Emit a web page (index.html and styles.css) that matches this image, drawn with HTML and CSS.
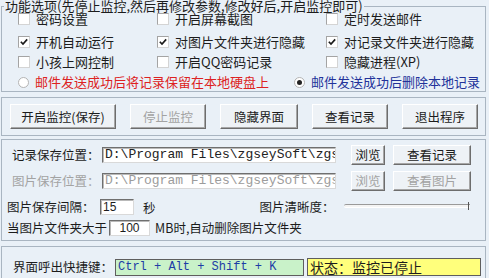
FILE: index.html
```html
<!DOCTYPE html>
<html lang="zh-CN">
<head>
<meta charset="UTF-8">
<meta name="viewport" content="width=device-width, initial-scale=1.0">
<title>监控设置</title>
<link rel="stylesheet" href="styles.css">
</head>
<body>

<div id="app">
  <fieldset class="options">
    <legend>功能选项(先停止监控,然后再修改参数,修改好后,开启监控即可)</legend>
    <div class="check-row first">
      <label class="opt"><span class="box"></span>密码设置</label>
      <label class="opt"><span class="box"></span>开启屏幕截图</label>
      <label class="opt"><span class="box"></span>定时发送邮件</label>
    </div>
    <div class="check-row second">
      <label class="opt"><span class="box"><svg viewBox="0 0 11 11"><path d="M2 5.2 L4.4 7.8 L9 2.6"/></svg></span>开机自动运行</label>
      <label class="opt"><span class="box"><svg viewBox="0 0 11 11"><path d="M2 5.2 L4.4 7.8 L9 2.6"/></svg></span>对图片文件夹进行隐藏</label>
      <label class="opt"><span class="box"><svg viewBox="0 0 11 11"><path d="M2 5.2 L4.4 7.8 L9 2.6"/></svg></span>对记录文件夹进行隐藏</label>
    </div>
    <div class="check-row">
      <label class="opt"><span class="box"></span>小孩上网控制</label>
      <label class="opt"><span class="box"></span>开启QQ密码记录</label>
      <label class="opt"><span class="box"></span>隐藏进程(XP)</label>
    </div>
    <div class="check-row radios">
      <label class="opt keep"><span class="radio"></span>邮件发送成功后将记录保留在本地硬盘上</label>
      <label class="opt del"><span class="radio on"></span>邮件发送成功后删除本地记录</label>
    </div>
  </fieldset>

  <div class="panel actions">
    <button class="btn w-start">开启监控(保存)</button>
    <button class="btn w-std off">停止监控</button>
    <button class="btn w-hide">隐藏界面</button>
    <button class="btn w-std">查看记录</button>
    <button class="btn w-std">退出程序</button>
  </div>

  <div class="panel settings">
    <div class="set-row">
      <span class="lbl path-lbl">记录保存位置：</span>
      <span class="field path">D:\Program Files\zgseySoft\zgse</span>
      <button class="btn small browse">浏览</button>
      <button class="btn small view">查看记录</button>
    </div>
    <div class="set-row r2">
      <span class="lbl path-lbl off">图片保存位置：</span>
      <span class="field path off">D:\Program Files\zgseySoft\zgse</span>
      <button class="btn small browse off">浏览</button>
      <button class="btn small view off">查看图片</button>
    </div>
    <div class="set-row r3">
      <span class="lbl gap-lbl">图片保存间隔：</span>
      <span class="field num">15</span>
      <span class="unit">秒</span>
      <span class="lbl clarity">图片清晰度：</span>
      <span class="slider"></span>
    </div>
    <div class="set-row r4">
      <span class="lbl">当图片文件夹大于</span>
      <span class="field num size">100</span>
      <span class="lbl after">MB时,自动删除图片文件夹</span>
    </div>
  </div>

  <div class="panel hotkey">
    <span class="lbl">界面呼出快捷键：</span>
    <span class="keys">Ctrl + Alt + Shift + K</span>
    <span class="status">状态：监控已停止</span>
  </div>
</div>

</body>
</html>
```

FILE: styles.css
```css
body {
  margin: 0;
  width: 489px;
  height: 278px;
  overflow: hidden;
  background-color: #e9f0f7;
  font-family: "Noto Sans CJK SC", "Liberation Sans", sans-serif;
  font-size: 12.5px;
  color: #1c1c1c;
}

#app {
  padding: 0 3px 0 1px;
}

/* groupbox du haut */
.options {
  margin: 0;
  padding: 0 0 1px 0;
  border: 1px solid #a9b5c1;
  min-width: 0;
}

.options legend {
  margin-left: 2px;
  padding: 0 1px;
  font-size: 13px;
  line-height: 12px;
}

.check-row {
  display: grid;
  grid-template-columns: 139px 169px 1fr;
  align-items: center;
  height: 16px;
  padding-left: 16px;
  margin-top: 4px;
  font-size: 13px;
  line-height: 16px;
}

.check-row.first {
  margin-top: 0;
  height: 13px;
  line-height: 13px;
}

.check-row.second {
  margin-top: 9px;
}

.check-row.radios {
  grid-template-columns: 276px 1fr;
}

.opt {
  display: flex;
  align-items: center;
  white-space: nowrap;
}

.box {
  width: 10px;
  height: 10px;
  margin-right: 6px;
  background-color: #fff;
  border: 1px solid #a4a4a4;
  border-right-color: #d4d4d4;
  border-bottom-color: #d4d4d4;
  flex: none;
}

.box svg {
  display: block;
  width: 10px;
  height: 10px;
}

.box path {
  fill: none;
  stroke: #1a1a1a;
  stroke-width: 1.8;
}

.radio {
  width: 9px;
  height: 9px;
  margin-right: 6px;
  border: 1px solid #b4b4b4;
  border-radius: 50%;
  background-color: #fff;
  flex: none;
  position: relative;
}

.radio.on::after {
  content: "";
  position: absolute;
  left: 2px;
  top: 2px;
  width: 5px;
  height: 5px;
  border-radius: 50%;
  background-color: #222;
}

.keep {
  color: #dd2222;
}

.del {
  color: #22329a;
}

/* panneaux */
.panel {
  border: 1px solid #a9b5c1;
}

.actions {
  margin-top: 5px;
  display: flex;
  gap: 14px;
  padding: 6px 0 6px 8px;
}

.btn {
  font-family: "Noto Sans CJK SC", "Liberation Sans", sans-serif;
  font-size: 12.5px;
  color: #1c1c1c;
  background-color: #eef2f6;
  border: 1px solid;
  border-color: #ffffff #6d6d6d #6d6d6d #ffffff;
  box-shadow: inset -1px -1px 0 #a6a6a6;
  padding: 0;
  height: 25px;
  line-height: 20px;
  cursor: pointer;
}

.btn.off {
  color: #a3a3a3;
}

.w-start {
  width: 106px;
}

.w-std {
  width: 76px;
}

.w-hide {
  width: 78px;
}

.settings {
  margin-top: 3px;
  padding: 5px 0 2px 0;
}

.set-row {
  display: flex;
  align-items: center;
  height: 20px;
  white-space: nowrap;
}

.set-row.r2,
.set-row.r3 {
  margin-top: 6px;
}

.set-row.r4 {
  margin-top: 1px;
}

.lbl {
  line-height: 16px;
}

.lbl.off {
  color: #a3a3a3;
}

.path-lbl {
  width: 90px;
  padding-left: 10px;
}

.field {
  background-color: #fff;
  border: 1px solid;
  border-color: #6f6f6f #d9d9d9 #d9d9d9 #6f6f6f;
  box-shadow: inset 1px 1px 0 #b9b9b9;
  height: 14px;
  line-height: 14px;
  overflow: hidden;
}

.path {
  width: 230px;
  padding-left: 2px;
  font-family: "Liberation Mono", monospace;
  font-size: 13px;
  color: #222;
}

.path.off {
  color: #9c9c9c;
}

.btn.small {
  height: 20px;
  line-height: 16px;
}

.browse {
  width: 34px;
  margin-left: 15px;
}

.view {
  width: 78px;
  margin-left: 8px;
}

.set-row.r3,
.set-row.r4 {
  padding-left: 5px;
}

.gap-lbl {
  width: 93px;
}

.num {
  font-family: "Liberation Sans", sans-serif;
  font-size: 12px;
  width: 30px;
  padding-left: 2px;
}

.unit {
  margin-left: 9px;
}

.clarity {
  margin-left: 104px;
}

.slider {
  position: relative;
  width: 126px;
  height: 2px;
  margin-left: 9px;
  margin-top: -3px;
  background-color: #f4f4f4;
  border-top: 1px solid #9a9a9a;
  border-bottom: 1px solid #ffffff;
  border-radius: 2px 0 0 2px;
}

.slider::after {
  content: "";
  position: absolute;
  right: 1px;
  top: -3px;
  width: 1px;
  height: 8px;
  background-color: #555;
}

.size {
  width: 39px;
  padding-left: 0;
  text-align: center;
  margin-left: 2px;
}

.lbl.after {
  margin-left: 5px;
}

.hotkey {
  margin-top: 5px;
  padding: 11px 0 4px 11px;
  display: flex;
  align-items: center;
}

.hotkey .lbl {
  width: 102px;
}

.keys {
  width: 185px;
  height: 15px;
  padding-left: 2px;
  line-height: 15px;
  background-color: #c9f2c9;
  border: 1px solid #5e5e5e;
  font-family: "Liberation Mono", monospace;
  font-size: 12px;
  color: #1d3da6;
}

.status {
  width: 170px;
  height: 16px;
  margin-left: 3px;
  padding-left: 2px;
  line-height: 16px;
  background-color: #ffff7c;
  border: 1px solid #5e5e5e;
  font-size: 14px;
}
```
